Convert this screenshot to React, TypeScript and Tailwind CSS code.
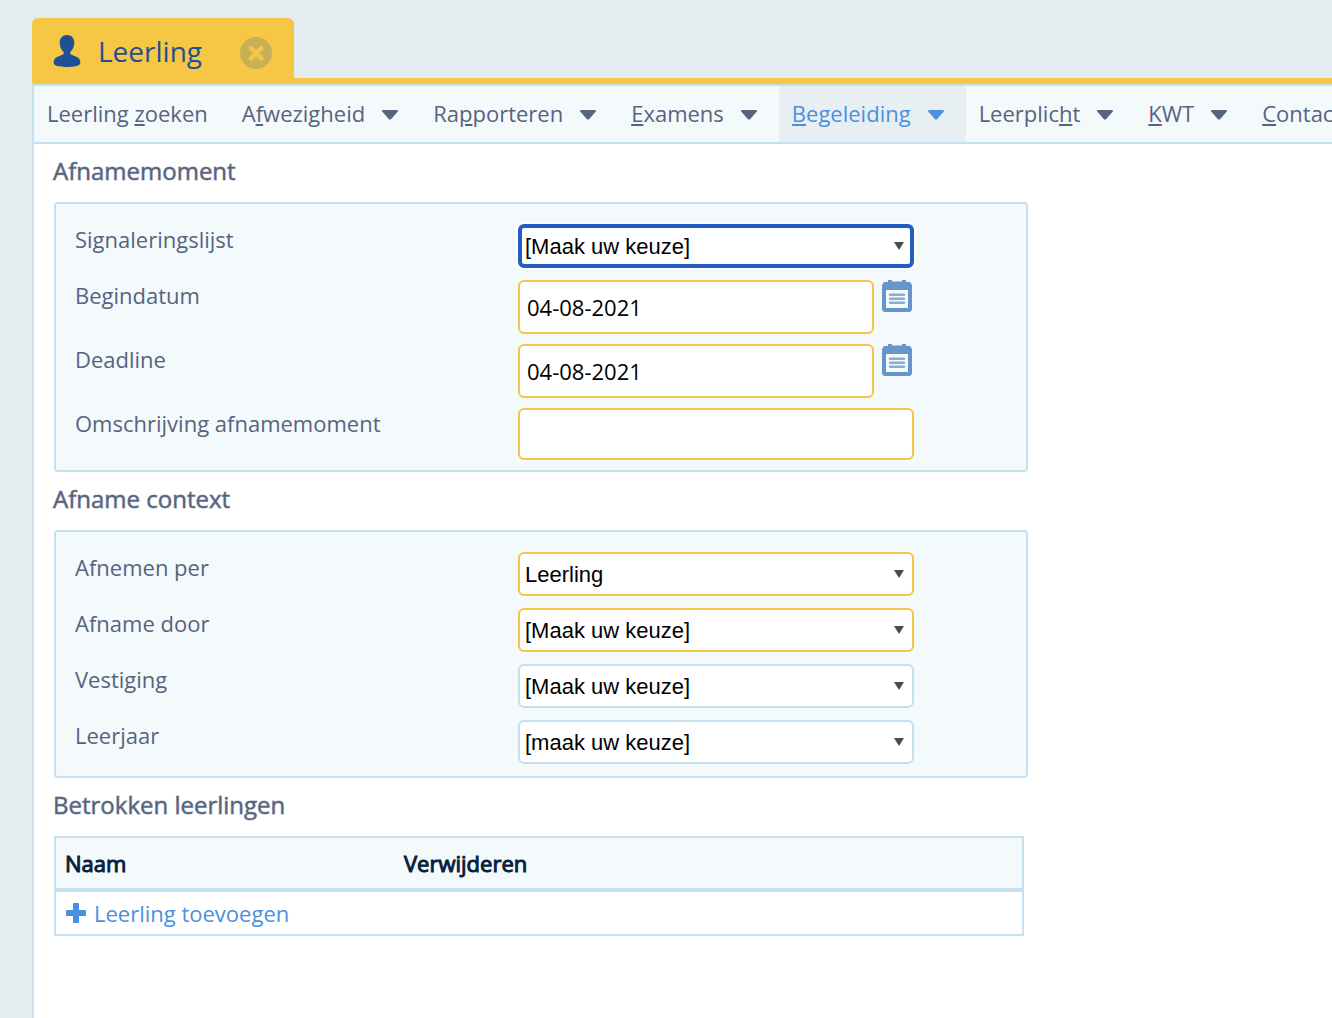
import { useState } from 'react';
import clsx from 'clsx';

type MenuItem = { before: string; hotkey: string; after: string; dropdown: boolean };

const menuItems: MenuItem[] = [
    { before: 'Leerling ', hotkey: 'z', after: 'oeken', dropdown: false },
    { before: 'A', hotkey: 'f', after: 'wezigheid', dropdown: true },
    { before: 'Ra', hotkey: 'p', after: 'porteren', dropdown: true },
    { before: '', hotkey: 'E', after: 'xamens', dropdown: true },
    { before: '', hotkey: 'B', after: 'egeleiding', dropdown: true },
    { before: 'Leerplic', hotkey: 'h', after: 't', dropdown: true },
    { before: '', hotkey: 'K', after: 'WT', dropdown: true },
    { before: '', hotkey: 'C', after: 'ontact', dropdown: true },
];

function UserIcon() {
    return (
        <svg viewBox="0 0 28 32" className="h-8 w-7" fill="#1e5096" aria-hidden="true">
            <path d="M14 0C18.6 0 21.4 3.2 21.3 8C21.2 12 19.6 14.6 17.8 16.6C17 17.6 17 19 18 19.6C20 20.8 24 21.4 26 23.6C27.4 25.2 27.8 27.4 27 29C25.6 31.2 20 32 14 32C8 32 2.4 31.2 1 29C.2 27.4 .6 25.2 2 23.6C4 21.4 8 20.8 10 19.6C11 19 11 17.6 10.2 16.6C8.4 14.6 6.8 12 6.7 8C6.6 3.2 9.4 0 14 0Z" />
        </svg>
    );
}

function CloseIcon() {
    return (
        <svg viewBox="0 0 32 32" className="h-8 w-8" aria-hidden="true">
            <circle cx="16" cy="16" r="16" fill="#c9af55" />
            <path d="M11 11L21.4 21.4M21.4 11L11 21.4" stroke="#f6c745" strokeWidth="4.4" strokeLinecap="round" />
        </svg>
    );
}

function CalendarIcon() {
    return (
        <svg viewBox="0 0 30 32" className="h-8 w-[30px]" aria-hidden="true">
            <path d="M2 2H6V0H10V1.5H20V0H24V2H28L30 5V30L28 32H2L0 30V5Z" fill="#6796cb" />
            <path d="M4 10H26V28H4Z" fill="#f4f9fc" />
            <path d="M8 14.8H22M8 18.8H22M8 22.8H22" stroke="#88add9" strokeWidth="2.4" strokeLinecap="round" />
        </svg>
    );
}

function Caret() {
    return (
        <svg viewBox="0 0 16 10" className="mt-1 mr-px h-[10px] w-4" fill="currentColor" aria-hidden="true">
            <path d="M1 0H15Q16.6 .4 15.6 1.8L9 9.2Q8 10 7 9.2L.4 1.8Q-.6 .4 1 0Z" />
        </svg>
    );
}

function FieldRow({ id, label, children }: { id: string; label: string; children: React.ReactNode }) {
    return (
        <div className="flex items-start">
            <label htmlFor={id} className="w-[443px] shrink-0 leading-[30px]">{label}</label>
            {children}
        </div>
    );
}

function SelectField({ id, label, option, variant }: { id: string; label: string; option: string; variant: 'active' | 'required' | 'optional' }) {
    return (
        <FieldRow id={id} label={label}>
            <div className="relative mb-3 w-[396px]">
                <select
                    id={id}
                    className={clsx(
                        "block h-11 w-full appearance-none rounded-md bg-white font-['Liberation_Sans',sans-serif] text-[22px] text-black outline-none",
                        variant === 'active' && 'border-4 border-[#245dc1] px-[3px] ring-2 ring-white',
                        variant === 'required' && 'border-2 border-[#f6c745] px-[5px]',
                        variant === 'optional' && 'border-2 border-[#c5e0ee] px-[5px]'
                    )}
                >
                    <option>{option}</option>
                </select>
                <svg viewBox="0 0 10 8" className="pointer-events-none absolute top-[18px] right-[10px] h-2 w-[10px]" fill="#4a4a4a" aria-hidden="true">
                    <path d="M0 0H10L5 8Z" />
                </svg>
            </div>
        </FieldRow>
    );
}

function DateField({ id, label }: { id: string; label: string }) {
    const [value, setValue] = useState('04-08-2021');

    return (
        <FieldRow id={id} label={label}>
            <input
                id={id}
                type="text"
                value={value}
                onChange={(e) => setValue(e.target.value)}
                className="mb-[10px] h-[54px] w-[356px] rounded-md border-2 border-[#f6c745] bg-white px-[7px] text-black outline-none"
            />
            <button type="button" aria-label="Kalender" className="ml-2 cursor-pointer">
                <CalendarIcon />
            </button>
        </FieldRow>
    );
}

function SectionTitle({ children }: { children: React.ReactNode }) {
    return <h2 className="-ml-px pb-1 text-2xl leading-[54px] font-normal [-webkit-text-stroke:1px_#56647f80]">{children}</h2>;
}

function Panel({ children }: { children: React.ReactNode }) {
    return (
        <div className="max-w-[974px] rounded border-2 border-[#c5e0ee] bg-[#f4f9fc] pt-5 pl-[19px]">{children}</div>
    );
}

export default function App() {
    const [active, setActive] = useState('B');

    return (
        <div className="flex min-h-screen flex-col overflow-hidden bg-[#e6edf0] pt-[18px] pl-8 font-['Open_Sans',sans-serif] text-[22px] text-[#56647f]">
            {/* Tab */}
            <div className="flex border-b-[6px] border-[#f6c745]">
                <div className="flex h-[60px] items-center rounded-t-md bg-[#f6c745] pt-[6px] pr-[22px] pl-[21px] text-[#1e5096]">
                    <UserIcon />
                    <span className="mr-[38px] ml-[17px] text-[28px] leading-8">Leerling</span>
                    <button type="button" aria-label="Sluiten" className="mt-1 cursor-pointer">
                        <CloseIcon />
                    </button>
                </div>
            </div>

            {/* Menu */}
            <nav className="flex border-y-2 border-l-2 border-[#c5e0ee] bg-[#f4f9fc]">
                {menuItems.map((item) => (
                    <button
                        key={item.hotkey}
                        type="button"
                        onClick={() => setActive(item.hotkey)}
                        className={clsx(
                            'flex h-14 shrink-0 cursor-pointer items-center gap-[17px] pr-[21px] pb-[2px] pl-[13px] whitespace-pre',
                            active === item.hotkey && 'bg-[#e8eff3] text-[#4a90e2]'
                        )}
                    >
                        <span>{item.before}<u className="decoration-2 underline-offset-2">{item.hotkey}</u>{item.after}</span>
                        {item.dropdown && <Caret />}
                    </button>
                ))}
            </nav>

            <main className="flex-1 border-l-2 border-[#d3e1ec] bg-white px-5 pb-10">
                <SectionTitle>Afnamemoment</SectionTitle>
                <Panel>
                    <SelectField id="signaleringslijst" label="Signaleringslijst" option="[Maak uw keuze]" variant="active" />
                    <DateField id="begindatum" label="Begindatum" />
                    <DateField id="deadline" label="Deadline" />
                    <FieldRow id="omschrijving" label="Omschrijving afnamemoment">
                        <input
                            id="omschrijving"
                            type="text"
                            className="mb-[10px] h-[52px] w-[396px] rounded-md border-2 border-[#f6c745] bg-white px-[7px] text-black outline-none"
                        />
                    </FieldRow>
                </Panel>

                <SectionTitle>Afname context</SectionTitle>
                <Panel>
                    <SelectField id="afnemen-per" label="Afnemen per" option="Leerling" variant="required" />
                    <SelectField id="afname-door" label="Afname door" option="[Maak uw keuze]" variant="required" />
                    <SelectField id="vestiging" label="Vestiging" option="[Maak uw keuze]" variant="optional" />
                    <SelectField id="leerjaar" label="Leerjaar" option="[maak uw keuze]" variant="optional" />
                </Panel>

                <SectionTitle>Betrokken leerlingen</SectionTitle>
                <table className="w-full max-w-[970px] border-separate border-spacing-0 border-2 border-[#c5e0ee] text-left">
                    <thead className="bg-[#f4f9fc] text-[#07203d] [-webkit-text-stroke:1px_#07203d]">
                        <tr>
                            <th className="h-[54px] w-[339px] border-b-4 border-[#c5e0ee] p-0 pl-[9px] font-normal">Naam</th>
                            <th className="border-b-4 border-[#c5e0ee] p-0 pl-[9px] font-normal">Verwijderen</th>
                        </tr>
                    </thead>
                    <tbody>
                        <tr>
                            <td colSpan={2} className="h-[42px] p-0 pl-[10px]">
                                <a href="#toevoegen" className="flex items-center gap-2 leading-8 text-[#4a90e2]">
                                    <svg viewBox="0 0 20 20" className="h-5 w-5" fill="currentColor" aria-hidden="true">
                                        <path d="M8 0H12Q13 0 13 1V7H19Q20 7 20 8V12Q20 13 19 13H13V19Q13 20 12 20H8Q7 20 7 19V13H1Q0 13 0 12V8Q0 7 1 7H7V1Q7 0 8 0Z" />
                                    </svg>
                                    <span>Leerling toevoegen</span>
                                </a>
                            </td>
                        </tr>
                    </tbody>
                </table>
            </main>
        </div>
    );
}
